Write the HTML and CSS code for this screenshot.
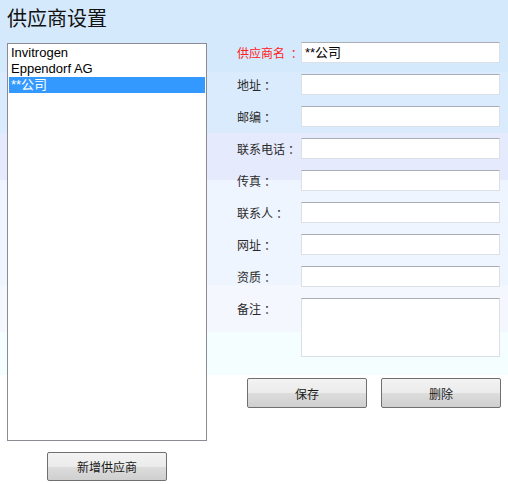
FILE: index.html
```html
<!DOCTYPE html>
<html lang="zh-CN">
<head>
<meta charset="utf-8">
<title>供应商设置</title>
<link rel="stylesheet" href="styles.css">
</head>
<body>
<div class="page">
  <h1 class="title">供应商设置</h1>
  <div class="main">
    <div class="left">
      <div class="list">
        <div class="item">Invitrogen</div>
        <div class="item">Eppendorf AG</div>
        <div class="item selected">**公司</div>
      </div>
      <button class="btn add-btn">新增供应商</button>
    </div>
    <div class="right">
      <div class="row"><span class="label required">供应商名 <span class="colon">：</span></span><div class="input">**公司</div></div>
      <div class="row"><span class="label">地址<span class="colon">：</span></span><div class="input"></div></div>
      <div class="row"><span class="label">邮编<span class="colon">：</span></span><div class="input"></div></div>
      <div class="row"><span class="label">联系电话<span class="colon">：</span></span><div class="input"></div></div>
      <div class="row"><span class="label">传真<span class="colon">：</span></span><div class="input"></div></div>
      <div class="row"><span class="label">联系人<span class="colon">：</span></span><div class="input"></div></div>
      <div class="row"><span class="label">网址<span class="colon">：</span></span><div class="input"></div></div>
      <div class="row"><span class="label">资质<span class="colon">：</span></span><div class="input"></div></div>
      <div class="row row-tall"><span class="label">备注<span class="colon">：</span></span><div class="input textarea"></div></div>
      <div class="actions">
        <button class="btn">保存</button>
        <button class="btn">删除</button>
      </div>
    </div>
  </div>
</div>
</body>
</html>
```
FILE: styles.css
```css
html, body {
  margin: 0;
  padding: 0;
}
body {
  width: 508px;
  height: 484px;
  overflow: hidden;
  font-family: "Liberation Sans", "Noto Sans CJK SC", sans-serif;
  color: #222;
  background: linear-gradient(to bottom,
    #d5e9fc 0px, #d5e9fc 72px,
    #d9ebfc 72px, #d9ebfc 133px,
    #e5eafc 133px, #e5eafc 180px,
    #eef5fe 180px, #eef5fe 285px,
    #f5f7fe 285px, #f5f7fe 332px,
    #f5feff 332px, #f5feff 375px,
    #ffffff 375px, #ffffff 484px);
}
.page {
  padding: 4px 0 0 7px;
}
.title {
  margin: 0;
  height: 28px;
  line-height: 28px;
  font-size: 20px;
  font-weight: normal;
  font-family: "Noto Sans CJK SC", sans-serif;
  color: #111;
}
.main {
  display: flex;
  align-items: flex-start;
  margin-top: 10px;
}
.left {
  width: 200px;
  display: flex;
  flex-direction: column;
  align-items: center;
}
.list {
  margin-top: 1px;
  width: 200px;
  height: 398px;
  box-sizing: border-box;
  border: 1px solid #8b8b93;
  background: #fff;
  padding: 1px;
}
.item {
  height: 16px;
  line-height: 16px;
  padding-left: 2px;
  font-size: 13px;
  color: #000;
  white-space: nowrap;
}
.item.selected {
  background: #3399ff;
  color: #fff;
}
.btn {
  width: 120px;
  height: 30px;
  box-sizing: border-box;
  border: 1px solid #707070;
  border-radius: 2px;
  background: linear-gradient(to bottom, #f3f3f3 0%, #ebebeb 50%, #dddddd 51%, #cfcfcf 100%);
  font-family: "Noto Sans CJK SC", sans-serif;
  font-size: 12px;
  color: #1a1a1a;
  padding: 0;
}
.add-btn {
  margin-top: 11px;
  height: 29px;
}
.right {
  margin-left: 30px;
  width: 264px;
}
.row {
  display: flex;
  align-items: flex-start;
  height: 21px;
  margin-bottom: 11px;
}
.row-tall {
  height: 59px;
}
.label {
  width: 64px;
  line-height: 21px;
  font-size: 12px;
  font-family: "Noto Sans CJK SC", sans-serif;
  color: #2a2a2a;
  white-space: nowrap;
}
.colon {
  font-family: "Noto Sans CJK TC", sans-serif;
  padding-left: 3px;
}
.label.required {
  color: #ff2020;
}
.input {
  width: 199px;
  height: 21px;
  box-sizing: border-box;
  background: #fff;
  border: 1px solid #dbdfe6;
  border-top-color: #abadb3;
  padding-left: 3px;
  font-size: 13px;
  line-height: 19px;
  color: #000;
}
.input.textarea {
  height: 59px;
}
.actions {
  display: flex;
  gap: 14px;
  margin-top: 21px;
  padding-left: 10px;
}
```
